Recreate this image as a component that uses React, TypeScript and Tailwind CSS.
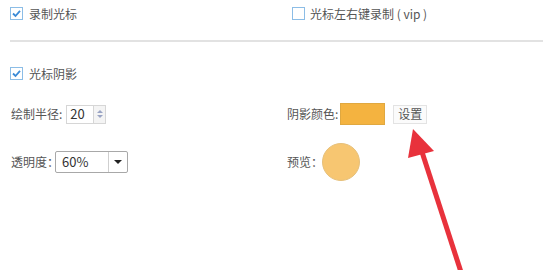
import React from "react";

const font = { fontFamily: '"Noto Sans CJK SC", "Noto Sans", sans-serif' };

const Check = ({ checked }: { checked: boolean }) => (
  <span className="flex h-[13px] w-[13px] items-center justify-center border border-[#8cbde6] bg-white">
    {checked && (
      <svg width="11" height="11" viewBox="0 0 11 11">
        <path d="M2 5.5 L4.5 8 L9 2.8" fill="none" stroke="#3b8ad6" strokeWidth="1.8" />
      </svg>
    )}
  </span>
);

const App: React.FC = () => {
  return (
    <div
      className="relative h-[270px] w-[543px] overflow-hidden bg-white text-[12px] text-[#555]"
      style={font}
    >
      {/* row 1 */}
      <div className="flex items-center pt-[7px]">
        <div className="flex w-[292px] items-center gap-[6px] pl-[10px]">
          <Check checked />
          <span className="leading-[13px]">录制光标</span>
        </div>
        <div className="flex items-center gap-[5px]">
          <Check checked={false} />
          <span className="leading-[13px]">光标左右键录制 ( vip )</span>
        </div>
      </div>

      <div className="ml-[10px] mt-[20px] h-[2px] bg-[#e2e2e2]" />

      {/* shadow toggle */}
      <div className="mt-[25px] flex items-center gap-[6px] pl-[10px]">
        <Check checked />
        <span className="leading-[13px]">光标阴影</span>
      </div>

      {/* radius / colour */}
      <div className="mt-[23px] flex items-center">
        <div className="flex w-[287px] items-center pl-[11px]">
          <span>绘制半径:</span>
          <div className="ml-[4px] flex h-[19px] items-stretch">
            <div className="flex w-[28px] items-center border border-[#d6d6d6] pl-[3px] text-[13px] text-[#333]">
              20
            </div>
            <div className="flex w-[12px] flex-col items-center justify-center gap-[2px] border border-l-0 border-[#d6d6d6] bg-[#f4f4f4]">
              <span className="h-0 w-0 border-x-[3px] border-b-[3px] border-x-transparent border-b-[#9aa4c4]" />
              <span className="h-0 w-0 border-x-[3px] border-t-[3px] border-x-transparent border-t-[#9aa4c4]" />
            </div>
          </div>
        </div>
        <div className="flex items-center">
          <span>阴影颜色:</span>
          <div className="ml-[2px] h-[22px] w-[45px] border border-[#e0a840] bg-[#f4b340]" />
          <button className="ml-[8px] flex h-[19px] w-[34px] items-center justify-center border border-[#e3e3e3] bg-[#fbfbfb] text-[12px] text-[#555]">
            设置
          </button>
        </div>
      </div>

      {/* opacity / preview */}
      <div className="mt-[18px] flex items-center">
        <div className="flex w-[287px] items-center pl-[11px]">
          <span>透明度：</span>
          <div className="ml-[-4px] flex h-[22px] w-[73px] items-stretch rounded-[2px] border border-[#a8a8a8] bg-white">
            <div className="flex flex-1 items-center pl-[6px] text-[13px] text-[#333]">60%</div>
            <div className="flex w-[19px] items-center justify-center border-l border-[#cfcfcf]">
              <span className="h-0 w-0 border-x-[4px] border-t-[4px] border-x-transparent border-t-[#222]" />
            </div>
          </div>
        </div>
        <div className="flex items-center">
          <span>预览：</span>
          <div className="ml-[-1px] h-[38px] w-[38px] rounded-full border border-[#e6c07a] bg-[#f7c671]" />
        </div>
      </div>

      {/* red arrow overlay */}
      <svg className="absolute left-0 top-0" width="543" height="270" viewBox="0 0 543 270">
        <line x1="461" y1="272" x2="422" y2="152" stroke="#e8323c" strokeWidth="5" />
        <polygon points="413,129 408,158 434,151" fill="#e8323c" />
      </svg>
    </div>
  );
};

export default App;
